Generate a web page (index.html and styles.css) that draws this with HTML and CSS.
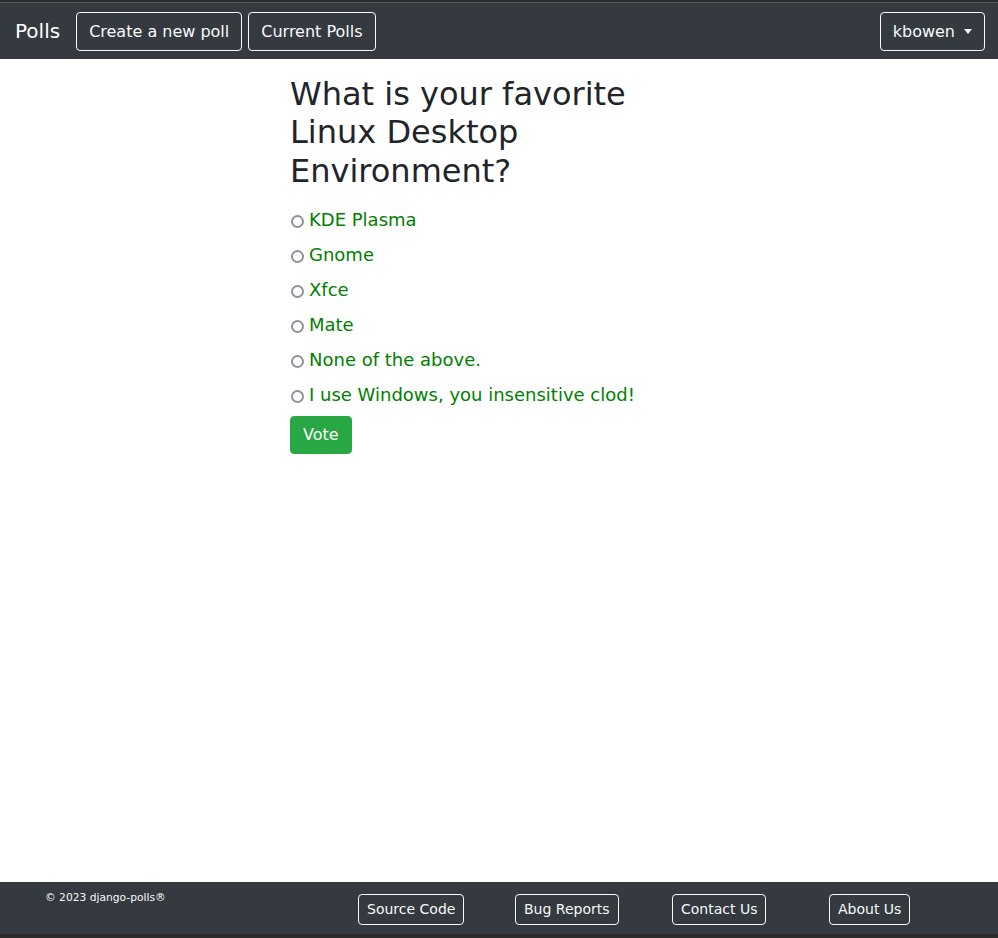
FILE: index.html
```html
<!DOCTYPE html>
<html lang="en">
<head>
<meta charset="utf-8">
<title>Polls</title>
<link rel="stylesheet" href="styles.css">
</head>
<body>
<div class="page">
  <div class="top-strip"></div>
  <nav class="navbar">
    <a class="brand" href="#">Polls</a>
    <div class="nav-left">
      <a class="btn btn-outline btn-nav" href="#">Create a new poll</a>
      <a class="btn btn-outline btn-nav" href="#">Current Polls</a>
    </div>
    <a class="btn btn-outline btn-nav dropdown-toggle" href="#">kbowen</a>
  </nav>
  <main class="main">
    <div class="poll">
      <h2 class="question">What is your favorite Linux Desktop Environment?</h2>
      <form class="choices">
        <label class="choice"><input type="radio" name="choice" class="radio"><span>KDE Plasma</span></label>
        <label class="choice"><input type="radio" name="choice" class="radio"><span>Gnome</span></label>
        <label class="choice"><input type="radio" name="choice" class="radio"><span>Xfce</span></label>
        <label class="choice"><input type="radio" name="choice" class="radio"><span>Mate</span></label>
        <label class="choice"><input type="radio" name="choice" class="radio"><span>None of the above.</span></label>
        <label class="choice"><input type="radio" name="choice" class="radio"><span>I use Windows, you insensitive clod!</span></label>
        <button type="button" class="btn btn-success">Vote</button>
      </form>
    </div>
  </main>
  <footer class="footer">
    <div class="copyright">© 2023 django-polls®</div>
    <div class="fcol"><a class="btn btn-outline btn-sm" href="#">Source Code</a></div>
    <div class="fcol"><a class="btn btn-outline btn-sm" href="#">Bug Reports</a></div>
    <div class="fcol"><a class="btn btn-outline btn-sm" href="#">Contact Us</a></div>
    <div class="fcol"><a class="btn btn-outline btn-sm" href="#">About Us</a></div>
  </footer>
  <div class="bottom-strip"></div>
</div>
</body>
</html>
```
FILE: styles.css
```css
html, body {
  margin: 0;
  padding: 0;
}
body {
  font-family: "DejaVu Sans", Verdana, sans-serif;
  font-size: 16px;
  line-height: 1.5;
  color: #212529;
  background: #fff;
}
.page {
  min-height: 100vh;
  display: flex;
  flex-direction: column;
}
.top-strip {
  height: 2px;
  background: #2b2b2b;
  border-bottom: 1px solid #5c5c5c;
}
.navbar {
  background: #343a40;
  height: 56px;
  box-sizing: border-box;
  padding: 9px 13px 8px 15px;
  display: flex;
  align-items: flex-start;
}
.brand {
  color: #fff;
  text-decoration: none;
  font-size: 20px;
  line-height: 30px;
  margin: 4px 16px 0 0;
}
.nav-left {
  display: flex;
  gap: 6px;
  flex: 1;
}
.btn {
  display: inline-block;
  font-family: inherit;
  font-size: 16px;
  line-height: 24px;
  padding: 6px 12px;
  border: 1px solid transparent;
  border-radius: 4px;
  text-decoration: none;
  cursor: pointer;
}
.btn-nav {
  padding: 7px 12px 6px;
}
.btn-outline {
  color: #f8f9fa;
  border-color: #f8f9fa;
  background: transparent;
}
.dropdown-toggle::after {
  content: "";
  display: inline-block;
  margin-left: 9px;
  vertical-align: 3px;
  border-top: 5px solid #f8f9fa;
  border-left: 4.5px solid transparent;
  border-right: 4.5px solid transparent;
}
.main {
  flex: 1;
}
.poll {
  margin-left: 290px;
  width: 400px;
  padding-top: 16px;
}
.question {
  font-size: 32px;
  font-weight: 500;
  line-height: 1.2;
  margin: 0 0 16px;
  color: #212529;
}
.choices {
  display: flex;
  flex-direction: column;
  align-items: flex-start;
}
.choice {
  display: flex;
  align-items: center;
  font-size: 18px;
  line-height: 27px;
  color: #008000;
  margin-bottom: 8px;
  white-space: nowrap;
}
.radio {
  appearance: none;
  -webkit-appearance: none;
  width: 13px;
  height: 13px;
  box-sizing: border-box;
  border: 2px solid #8f8f9d;
  border-radius: 50%;
  background: #fff;
  margin: 3px 5px 0 1px;
}
.btn-success {
  background: #28a745;
  border-color: #28a745;
  color: #fff;
  padding: 6px 12px 6px;
}
.footer {
  background: #343a40;
  height: 52px;
  box-sizing: border-box;
  padding: 8px 0 0 45px;
  display: grid;
  grid-template-columns: 313px repeat(4, 157px);
  align-items: start;
}
.copyright {
  color: #f8f9fa;
  font-size: 10.7px;
  line-height: 16px;
}
.fcol {
  padding-top: 4px;
}
.btn-sm {
  font-size: 14px;
  line-height: 21px;
  padding: 4px 8px;
}
.bottom-strip {
  height: 4px;
  background: #2c2c2c;
}
```
